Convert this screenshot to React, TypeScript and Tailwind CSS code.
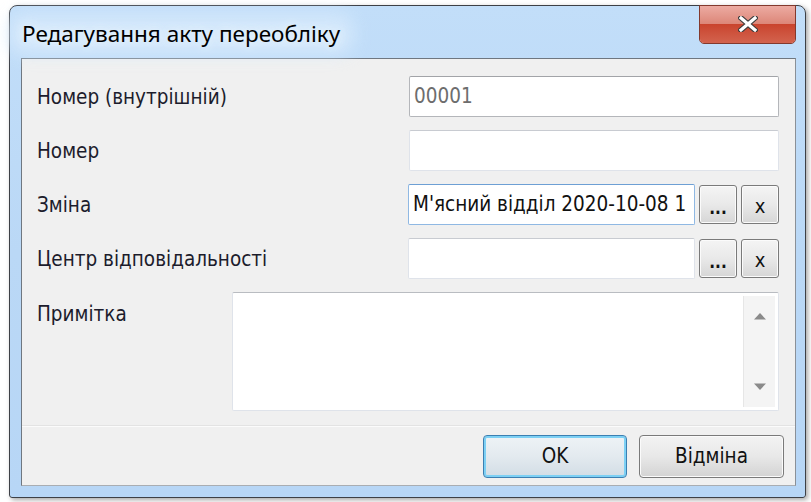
import React from "react";

const uiFont = { fontFamily: '"DejaVu Sans Condensed", "DejaVu Sans", sans-serif' };
const titleFont = { fontFamily: '"Noto Sans", "Open Sans", sans-serif' };

function CloseGlyph() {
  return (
    <svg width="20" height="16" viewBox="0 0 20 16">
      <path
        d="M3 2 L17 14 M17 2 L3 14"
        stroke="#3c3c3c"
        strokeWidth="5.5"
        strokeLinecap="square"
        fill="none"
      />
      <path
        d="M3 2 L17 14 M17 2 L3 14"
        stroke="#ffffff"
        strokeWidth="3.2"
        strokeLinecap="square"
        fill="none"
      />
    </svg>
  );
}

function TextBox({
  value,
  muted,
  focused,
  dark,
  className,
}: {
  value?: string;
  muted?: boolean;
  focused?: boolean;
  dark?: boolean;
  className: string;
}) {
  const border = focused
    ? "border-[#8fb8e3] border-t-[#6d9fd4]"
    : dark
    ? "border-[#b4b6ba] border-t-[#a2a4a8]"
    : "border-[#dfe3ea] border-t-[#c8cbd1]";
  return (
    <div
      className={`${className} h-[41px] bg-white border rounded-[2px] ${border} flex items-center overflow-hidden whitespace-nowrap pl-[4px] text-[20.5px] ${
        muted ? "text-[#6d6d6d]" : "text-[#111]"
      }`}
    >
      {value}
    </div>
  );
}

function SmallButton({ label }: { label: string }) {
  return (
    <div className="w-[38px] h-[39px] rounded-[3px] border border-[#7a7a7a] bg-gradient-to-b from-[#f4f4f4] via-[#e9e9e9] to-[#d6d6d6] flex items-center justify-center text-[#111] shadow-[inset_0_0_0_1px_#fbfbfb]">
      {label === "x" ? (
        <span className="pt-[3px] text-[20px] font-medium">x</span>
      ) : (
        <span className="pt-[8px] text-[17px] font-semibold">...</span>
      )}
    </div>
  );
}

function Label({ children }: { children: React.ReactNode }) {
  return <div className="text-[20.5px] text-[#1c1c2c] leading-none">{children}</div>;
}

export default function App() {
  return (
    <div className="w-[811px] h-[502px] bg-white overflow-hidden pt-[5px] pl-[9px]" style={uiFont}>
      <div className="relative w-[797px] h-[493px] flex flex-col border border-[#3d4046] rounded-t-[8px] rounded-b-[3px] bg-gradient-to-b from-[#c2def9] via-[#bad8f6] to-[#b7d6f6] shadow-[2px_2px_5px_rgba(0,0,0,0.35)]">
        {/* title bar */}
        <div className="h-[52px] flex items-center pl-[12px] pt-[4px]">
          <div
            className="relative text-[22.5px] leading-none text-black [text-shadow:0_0_8px_#eef7ff,0_0_14px_#e4f1fe]"
            style={titleFont}
          >
            <div className="absolute -inset-x-[14px] -inset-y-[10px] rounded-[16px] bg-[#d7eafc] blur-[8px] opacity-80" />
            <span className="relative">Редагування акту переобліку</span>
          </div>
        </div>

        {/* close button */}
        <div className="absolute top-[-1px] right-[9px] w-[97px] h-[39px] rounded-b-[5px] border border-[#83392d] overflow-hidden flex flex-col shadow-[inset_0_0_0_1px_rgba(255,210,200,0.6)]">
          <div className="h-[18px] bg-gradient-to-b from-[#ecaba2] to-[#dc8678]" />
          <div className="flex-1 bg-gradient-to-b from-[#c9432d] to-[#d3634e]" />
          <div className="absolute inset-0 flex items-center justify-center pb-[2px]">
            <CloseGlyph />
          </div>
        </div>

        {/* client area */}
        <div className="ml-[11px] mr-[9px] h-[428px] border border-[#6f7780] border-b-[#a9adb2] border-r-[#8a9097] bg-[#f0f0f0] flex flex-col">
          <div className="flex flex-col pt-[17px] pl-[15px] pr-[16px] gap-[13px]">
            <div className="flex items-center h-[41px]">
              <div className="flex-1 pt-[2px]">
                <Label>Номер (внутрішній)</Label>
              </div>
              <TextBox className="w-[370px]" value="00001" muted dark />
            </div>
            <div className="flex items-center h-[41px]">
              <div className="flex-1 pt-[2px]">
                <Label>Номер</Label>
              </div>
              <TextBox className="w-[370px]" />
            </div>
            <div className="flex items-center h-[41px]">
              <div className="flex-1 pt-[2px]">
                <Label>Зміна</Label>
              </div>
              <div className="flex items-center gap-[4px]">
                <TextBox className="w-[287px]" value="М'ясний відділ 2020-10-08 1" focused />
                <SmallButton label="..." />
                <SmallButton label="x" />
              </div>
            </div>
            <div className="flex items-center h-[41px]">
              <div className="flex-1 pt-[2px]">
                <Label>Центр відповідальності</Label>
              </div>
              <div className="flex items-center gap-[4px]">
                <TextBox className="w-[287px]" />
                <SmallButton label="..." />
                <SmallButton label="x" />
              </div>
            </div>
            <div className="flex h-[119px]">
              <div className="flex-1 pt-[12px]">
                <Label>Примітка</Label>
              </div>
              <div className="w-[547px] h-[119px] bg-white border border-[#dfe3ea] border-t-[#b9bcc1] rounded-[2px] flex justify-end p-[3px]">
                <div className="w-[32px] h-full bg-[#f4f4f4] border-l border-[#e6e6e6] flex flex-col items-center justify-between py-[16px]">
                  <svg width="14" height="8" viewBox="0 0 14 8">
                    <path d="M1 7.5 L7 1 L13 7.5 Z" fill="#8a8a8a" />
                  </svg>
                  <svg width="14" height="8" viewBox="0 0 14 8">
                    <path d="M1 0.5 L7 7 L13 0.5 Z" fill="#8a8a8a" />
                  </svg>
                </div>
              </div>
            </div>
          </div>

          {/* footer */}
          <div className="mt-auto h-[59px] border-t border-t-[#fbfbfb] shadow-[0_-1px_0_#e3e3e3] flex items-center justify-end gap-[12px] pr-[11px] pt-[1px]">
            <div className="w-[144px] h-[43px] rounded-[4px] border border-[#3c7fb1] shadow-[inset_0_0_0_2px_#7dd0f4] bg-gradient-to-b from-[#eef3f6] via-[#e3eaef] to-[#d2dde5] flex items-center justify-center text-[20.5px] text-[#111]">
              OK
            </div>
            <div className="w-[145px] h-[43px] rounded-[4px] border border-[#7a7a7a] shadow-[inset_0_0_0_1px_#fbfbfb] bg-gradient-to-b from-[#f3f3f3] via-[#e8e8e8] to-[#d3d3d3] flex items-center justify-center text-[20.5px] text-[#111]">
              Відміна
            </div>
          </div>
        </div>
      </div>
    </div>
  );
}
